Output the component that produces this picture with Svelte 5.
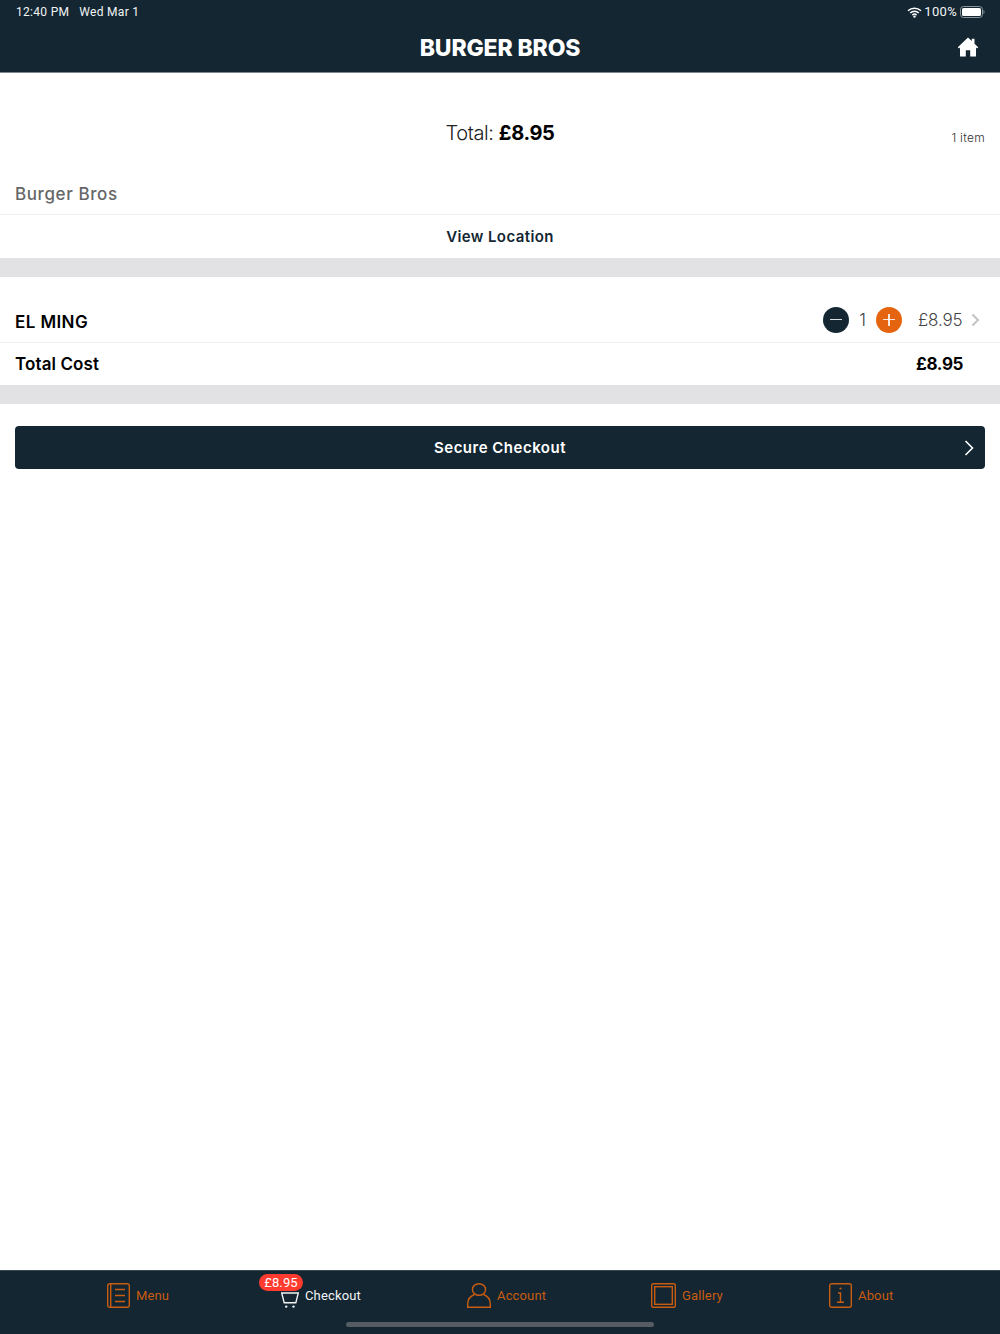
<script>
  const tabs = [
    { key: "menu", label: "Menu" },
    { key: "cart", label: "Checkout", active: true, badge: "£8.95" },
    { key: "account", label: "Account" },
    { key: "gallery", label: "Gallery" },
    { key: "about", label: "About" },
  ];
</script>

<div class="page">
  <header class="top">
    <div class="status">
      <span>12:40 PM</span>
      <span class="date">Wed Mar 1</span>
      <span class="spacer"></span>
      <svg class="wifi" width="15" height="11" viewBox="0 0 15 11">
        <path d="M1 3.8a9.3 9.3 0 0 1 13 0M3.2 6a6.2 6.2 0 0 1 8.6 0M5.4 8.1a3 3 0 0 1 4.2 0" fill="none" stroke="#fff" stroke-width="1.5" />
        <circle cx="7.5" cy="9.6" r="1.2" fill="#fff" />
      </svg>
      <span class="pct">100%</span>
      <svg width="25" height="12" viewBox="0 0 25 12">
        <rect x="0.5" y="0.5" width="22" height="11" rx="3" fill="none" stroke="#8a959b" />
        <rect x="2" y="2" width="19" height="8" rx="1.6" fill="#fff" />
        <path d="M23.5 4v4a2 2 0 0 0 1-2 2 2 0 0 0-1-2z" fill="#8a959b" />
      </svg>
    </div>
    <div class="bar">
      <h1>BURGER BROS</h1>
      <svg class="home" width="22" height="20" viewBox="0 0 22 20">
        <path d="M11 0.5 0.8 10.2l1.2 1.2L3 10.6V19.500h5.800v-6.300h4.400v6.300H19V10.600l1 .8 1.200-1.200L17.500 6.700V1.800h-2.700v2.300z" fill="#fff" />
      </svg>
    </div>
  </header>

  <main>
    <section class="summary">
      <div class="total">Total: <b>£8.95</b></div>
      <div class="count">1 item</div>
    </section>
    <div class="venue">Burger Bros</div>
    <div class="location">View Location</div>
    <div class="gap"></div>

    <div class="item">
      <span class="name">EL MING</span>
      <span class="stepper">
        <span class="round minus"><i></i></span>
        <span class="qty">1</span>
        <span class="round plus"><i></i><i class="v"></i></span>
      </span>
      <span class="price">£8.95</span>
      <svg class="chev" width="9" height="14" viewBox="0 0 9 14">
        <path d="M1.500 1.500 7 7l-5.500 5.500" fill="none" stroke="#c4c4c6" stroke-width="2" />
      </svg>
    </div>
    <div class="sum">
      <span>Total Cost</span>
      <b>£8.95</b>
    </div>
    <div class="gap"></div>

    <button type="button" class="secure">
      Secure Checkout
      <svg width="10" height="16" viewBox="0 0 10 16">
        <path d="M1.500 1 8.500 8l-7 7" fill="none" stroke="#fff" stroke-width="1.600" />
      </svg>
    </button>
  </main>

  <nav class="tabs">
    {#each tabs as tab}
      <div class="tab {tab.key}" class:active={tab.active}>
        {#if tab.badge}<span class="badge">{tab.badge}</span>{/if}
        {#if tab.key === "menu"}
          <svg width="23" height="25" viewBox="0 0 23 25" fill="none" stroke="currentColor" stroke-width="1.400">
            <rect x="0.700" y="0.700" width="21.600" height="23.600" rx="2" />
            <path d="M3.700 .7v23.600M8 6.500h10M8 12.500h10M8 18.500h10" />
          </svg>
        {:else if tab.key === "cart"}
          <svg width="18" height="16" viewBox="0 0 18 16" fill="none" stroke="currentColor" stroke-width="1.400">
            <path d="M0.700 1h16.600L14.800 10.800H3.200z" />
            <circle cx="5.200" cy="14.600" r="1.200" fill="currentColor" stroke="none" />
            <circle cx="12.500" cy="14.600" r="1.200" fill="currentColor" stroke="none" />
          </svg>
        {:else if tab.key === "account"}
          <svg width="24" height="25" viewBox="0 0 24 25" fill="none" stroke="currentColor" stroke-width="1.400">
            <ellipse cx="12" cy="6.500" rx="6.600" ry="5.800" />
            <path d="M7.500 11.500C3.500 13 .7 16.500 .7 21v3.300h22.600V21c0-4.500-2.800-8-6.800-9.500" />
          </svg>
        {:else if tab.key === "gallery"}
          <svg width="25" height="25" viewBox="0 0 25 25" fill="none" stroke="currentColor" stroke-width="1.400">
            <rect x="0.700" y="0.700" width="23.600" height="23.600" rx="1.500" />
            <rect x="3.700" y="3.700" width="17.600" height="17.600" />
          </svg>
        {:else}
          <svg width="23" height="25" viewBox="0 0 23 25" fill="none" stroke="currentColor" stroke-width="1.400">
            <rect x="0.700" y="0.700" width="21.600" height="23.600" rx="2" />
            <path d="M9 10h2.500v9M8 19.300h7" />
            <circle cx="11.500" cy="5.500" r="1.100" fill="currentColor" stroke="none" />
          </svg>
        {/if}
        <span class="label">{tab.label}</span>
      </div>
    {/each}
    <span class="home-indicator"></span>
  </nav>
</div>

<style>
  :global(body) {
    margin: 0;
    background: #fff;
  }

  .page {
    display: flex;
    flex-direction: column;
    height: 1334px;
    font-family: Inter, "Noto Sans", sans-serif;
    color: #000;
  }

  .top {
    height: 73px;
    box-sizing: border-box;
    flex: none;
    background: #132632;
    border-bottom: 1px solid #7d8a92;
    color: #fff;
  }

  .status {
    display: flex;
    align-items: center;
    height: 24px;
    padding: 0 15px 0 16px;
    font: 12px/24px Roboto, Inter, sans-serif;
    letter-spacing: 0.3px;
    color: #f2f4f5;
  }

  .date {
    margin-left: 10px;
  }

  .spacer {
    flex: 1;
  }

  .wifi {
    margin-right: -2px;
  }

  .pct {
    margin: 0 3px 0 4px;
    font-size: 13px;
  }

  .bar {
    position: relative;
    text-align: center;
  }

  h1 {
    margin: 0;
    font: 800 23px/49px Inter, sans-serif;
    letter-spacing: -0.15px;
  }

  .home {
    position: absolute;
    right: 21px;
    top: 13px;
  }

  main {
    flex: 1;
  }

  .summary {
    position: relative;
    height: 99px;
    box-sizing: border-box;
    padding-top: 47px;
    text-align: center;
  }

  .total {
    font-size: 20px;
    line-height: 26px;
    font-weight: 300;
    letter-spacing: -0.4px;
    color: #222;
  }

  .total b {
    font-weight: 700;
    color: #000;
  }

  .count {
    position: absolute;
    right: 15px;
    top: 56px;
    font-size: 12px;
    line-height: 18px;
    font-weight: 300;
    letter-spacing: 0.3px;
    color: #333;
  }

  .venue {
    height: 43px;
    box-sizing: border-box;
    padding: 11px 15px 0;
    font-size: 17px;
    line-height: 22px;
    font-weight: 500;
    letter-spacing: 0.6px;
    color: #666;
    border-bottom: 1px solid #efeff0;
  }

  .location {
    height: 43px;
    font-size: 15px;
    line-height: 44px;
    font-weight: 600;
    letter-spacing: 0.4px;
    text-align: center;
    color: #132632;
  }

  .gap {
    height: 19px;
    background: #e2e2e4;
  }

  .item {
    display: flex;
    align-items: center;
    height: 66px;
    box-sizing: border-box;
    padding: 22px 20px 0 15px;
    border-bottom: 1px solid #efeff0;
  }

  .name {
    flex: 1;
    padding-top: 2px;
    font-size: 17px;
    font-weight: 600;
    letter-spacing: 0.4px;
  }

  .stepper {
    display: flex;
    align-items: center;
    margin-top: -2px;
  }

  .round {
    position: relative;
    width: 26px;
    height: 26px;
    border-radius: 50%;
  }

  .round i {
    position: absolute;
    left: 7px;
    top: 12px;
    width: 12px;
    height: 1.500px;
    background: #fff;
    opacity: 0.85;
  }

  .round i.v {
    left: 12.250px;
    top: 7px;
    width: 1.500px;
    height: 12px;
  }

  .minus {
    background: #132632;
  }

  .plus {
    background: #e5640f;
  }

  .qty {
    width: 27px;
    text-align: center;
    font-size: 17px;
    font-weight: 300;
    color: #444;
  }

  .price {
    width: 44px;
    margin: -2px 0 0 16px;
    font-size: 17px;
    font-weight: 300;
    letter-spacing: -0.2px;
    color: #444;
  }

  .chev {
    margin-left: 9px;
    margin-top: -2px;
  }

  .sum {
    display: flex;
    justify-content: space-between;
    height: 42px;
    box-sizing: border-box;
    padding: 0 37px 0 15px;
    font-size: 17px;
    line-height: 42px;
    font-weight: 600;
    letter-spacing: 0.1px;
  }

  .sum b {
    font-weight: 700;
    letter-spacing: -0.4px;
  }

  .secure {
    position: relative;
    display: block;
    width: 970px;
    height: 43px;
    margin: 22px 15px 0;
    padding: 1px 0 0;
    border: none;
    border-radius: 4px;
    background: #132632;
    color: #fff;
    font: 600 15px/42px Inter, sans-serif;
    letter-spacing: 0.5px;
    text-align: center;
  }

  .secure svg {
    position: absolute;
    right: 11px;
    top: 14px;
  }

  .tabs {
    position: relative;
    flex: none;
    height: 64px;
    box-sizing: border-box;
    padding: 12px 0 0 107px;
    display: flex;
    align-items: flex-start;
    background: #132632;
    border-top: 1px solid #3a4a55;
    color: #c85c10;
  }

  .tab {
    position: relative;
    display: flex;
    align-items: center;
    height: 25px;
    font: 13px/25px Roboto, Inter, sans-serif;
    letter-spacing: 0.15px;
  }

  .tab.menu { width: 174px; }
  .tab.cart { width: 186px; }
  .tab.account { width: 184px; }
  .tab.gallery { width: 178px; }

  .tab.cart svg {
    margin-top: 9px;
  }

  .label {
    margin-left: 6px;
  }

  .active {
    color: #f2f4f5;
  }

  .badge {
    position: absolute;
    left: -22px;
    top: -9px;
    width: 44px;
    height: 17px;
    line-height: 17px;
    text-align: center;
    border-radius: 9px;
    background: #ff3b30;
    color: #fff;
    font-size: 13px;
  }

  .home-indicator {
    position: absolute;
    left: 346px;
    top: 51px;
    width: 308px;
    height: 5px;
    border-radius: 3px;
    background: #565d62;
  }
</style>
